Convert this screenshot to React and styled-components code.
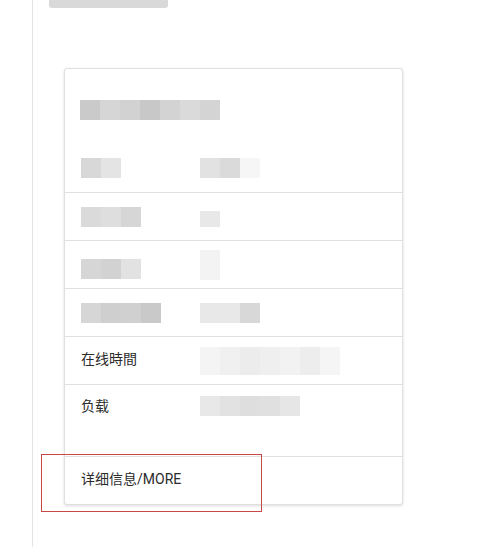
import styled, { createGlobalStyle } from "styled-components";

const GlobalStyle = createGlobalStyle`
  html, body {
    margin: 0;
    padding: 0;
    background: #fff;
  }
  body {
    font-family: Roboto, "Noto Sans CJK SC", "Noto Sans", sans-serif;
  }
`;

const Page = styled.div`
  width: 483px;
  height: 547px;
  overflow: hidden;
  padding-left: 32px;
  box-sizing: border-box;
`;

const Content = styled.div`
  border-left: 1px solid #e4e4e4;
  height: 547px;
  box-sizing: border-box;
  padding-left: 16px;
`;

const TopBar = styled.div`
  width: 119px;
  height: 8px;
  background: #d9d9d9;
  border-radius: 0 0 3px 3px;
`;

const Card = styled.div`
  position: relative;
  margin: 60px 0 0 15px;
  width: 337px;
  border: 1px solid #e0e0e0;
  border-radius: 3px;
  background: #fff;
  box-shadow: 0 1px 3px rgba(0, 0, 0, 0.14);
`;

const Header = styled.div`
  height: 75px;
  padding: 31px 0 0 15px;
  box-sizing: border-box;
`;

const Row = styled.div`
  display: flex;
  align-items: ${(p) => (p.$top ? "flex-start" : "center")};
  height: ${(p) => p.$h || 48}px;
  box-sizing: border-box;
  padding: ${(p) => (p.$top ? "11px 0 0 16px" : "0 0 0 16px")};
  border-top: ${(p) => (p.$first ? "none" : "1px solid #e0e0e0")};
  position: relative;
  color: #2b2b2b;
  font-size: 14px;
  line-height: 20px;
`;

const Text = styled.span`
  position: relative;
  top: -2px;
`;

const Label = styled.div`
  width: ${(p) => (p.$auto ? "auto" : "119px")};
  flex-shrink: 0;
`;

const Value = styled.div`
  flex: 1;
`;

const Blocks = styled.div`
  display: flex;
  height: ${(p) => p.$h || 20}px;
  margin-top: ${(p) => p.$mt || 0}px;
`;

const Block = styled.span`
  display: block;
  width: ${(p) => p.$w || 20}px;
  height: 100%;
`;

const Mark = styled.div`
  position: absolute;
  left: -24px;
  top: -3px;
  width: 219px;
  height: 56px;
  border: 1px solid #c94747;
`;

function Pixels({ shades, h, mt, w }) {
  return (
    <Blocks $h={h} $mt={mt}>
      {shades.map((c, i) => (
        <Block key={i} $w={w} style={{ background: c }} />
      ))}
    </Blocks>
  );
}

export default function App() {
  return (
    <Page>
      <GlobalStyle />
      <Content>
        <TopBar />
        <Card>
          <Header>
            <Pixels shades={["#cacaca", "#d6d6d6", "#d2d2d2", "#c8c8c8", "#d3d3d3", "#dadada", "#d4d4d4"]} />
          </Header>
          <Row $first>
            <Label><Pixels shades={["#d8d8d8", "#e4e4e4"]} /></Label>
            <Value><Pixels shades={["#e2e2e2", "#dadada", "#f6f6f6"]} /></Value>
          </Row>
          <Row>
            <Label><Pixels shades={["#dadada", "#dedede", "#d6d6d6"]} /></Label>
            <Value><Pixels shades={["#e8e8e8"]} h={16} mt={4} /></Value>
          </Row>
          <Row>
            <Label><Pixels shades={["#d6d6d6", "#d2d2d2", "#e2e2e2"]} mt={8} /></Label>
            <Value><Pixels shades={["#f3f3f3"]} h={30} /></Value>
          </Row>
          <Row>
            <Label><Pixels shades={["#d6d6d6", "#cfcfcf", "#d0d0d0", "#c9c9c9"]} /></Label>
            <Value><Pixels shades={["#e8e8e8", "#e8e8e8", "#d8d8d8"]} /></Value>
          </Row>
          <Row>
            <Label><Text>在线時間</Text></Label>
            <Value>
              <Pixels shades={["#f4f4f4", "#f0f0f0", "#ececec", "#efefef", "#f2f2f2", "#ededed", "#f5f5f5"]} h={28} />
            </Value>
          </Row>
          <Row $top $h={72}>
            <Label>负载</Label>
            <Value><Pixels shades={["#e8e8e8", "#e2e2e2", "#dedede", "#e0e0e0", "#e6e6e6"]} /></Value>
          </Row>
          <Row>
            <Label $auto><Text>详细信息/MORE</Text></Label>
            <Mark />
          </Row>
        </Card>
      </Content>
    </Page>
  );
}
